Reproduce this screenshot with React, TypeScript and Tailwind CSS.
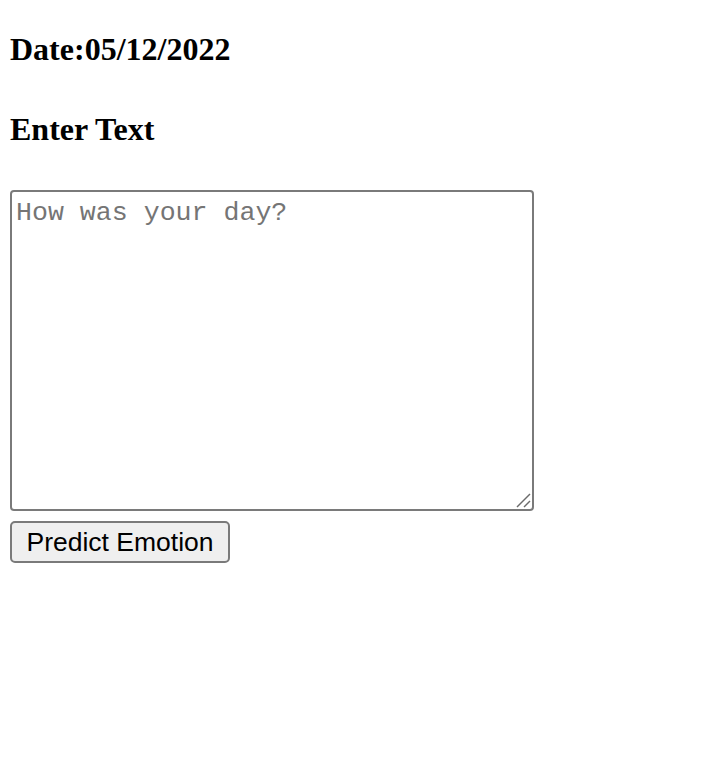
import React, { useState } from 'react';

const App: React.FC = () => {
  const [text, setText] = useState('');

  return (
    <div className="min-h-screen bg-white pl-[10px] pt-[31px] text-black">
      <h3 className="m-0 h-[36px] text-[32px] font-bold leading-[36px] font-['Liberation_Serif',serif]">
        Date:05/12/2022
      </h3>
      <h3 className="mt-[44px] h-[36px] text-[32px] font-bold leading-[36px] font-['Liberation_Serif',serif]">
        Enter Text
      </h3>
      <div className="relative mt-[43px] w-[524px]">
        <textarea
          value={text}
          onChange={(e) => setText(e.target.value)}
          placeholder="How was your day?"
          className="block h-[321px] w-[524px] resize-none rounded-[4px] border-2 border-[#7a7a7a] bg-white px-[4px] pt-[6px] pb-[4px] text-[26.6px] leading-[30px] font-['Liberation_Mono',monospace] placeholder:text-[#757575] outline-none"
        />
        {/* resize grip */}
        <svg className="pointer-events-none absolute right-[3px] bottom-[3px]" width="16" height="16" viewBox="0 0 16 16">
          <line x1="2" y1="15" x2="15" y2="2" stroke="#6b6b6b" strokeWidth="1.5" />
          <line x1="9" y1="15" x2="15" y2="9" stroke="#6b6b6b" strokeWidth="1.5" />
        </svg>
      </div>
      <button
        type="button"
        className="mt-[10px] block h-[42px] w-[220px] rounded-[5px] border-2 border-[#7a7a7a] bg-[#efefef] text-center text-[26.5px] leading-[30px] font-['Liberation_Sans',Arial,sans-serif] text-black"
      >
        Predict Emotion
      </button>
    </div>
  );
};

export default App;
